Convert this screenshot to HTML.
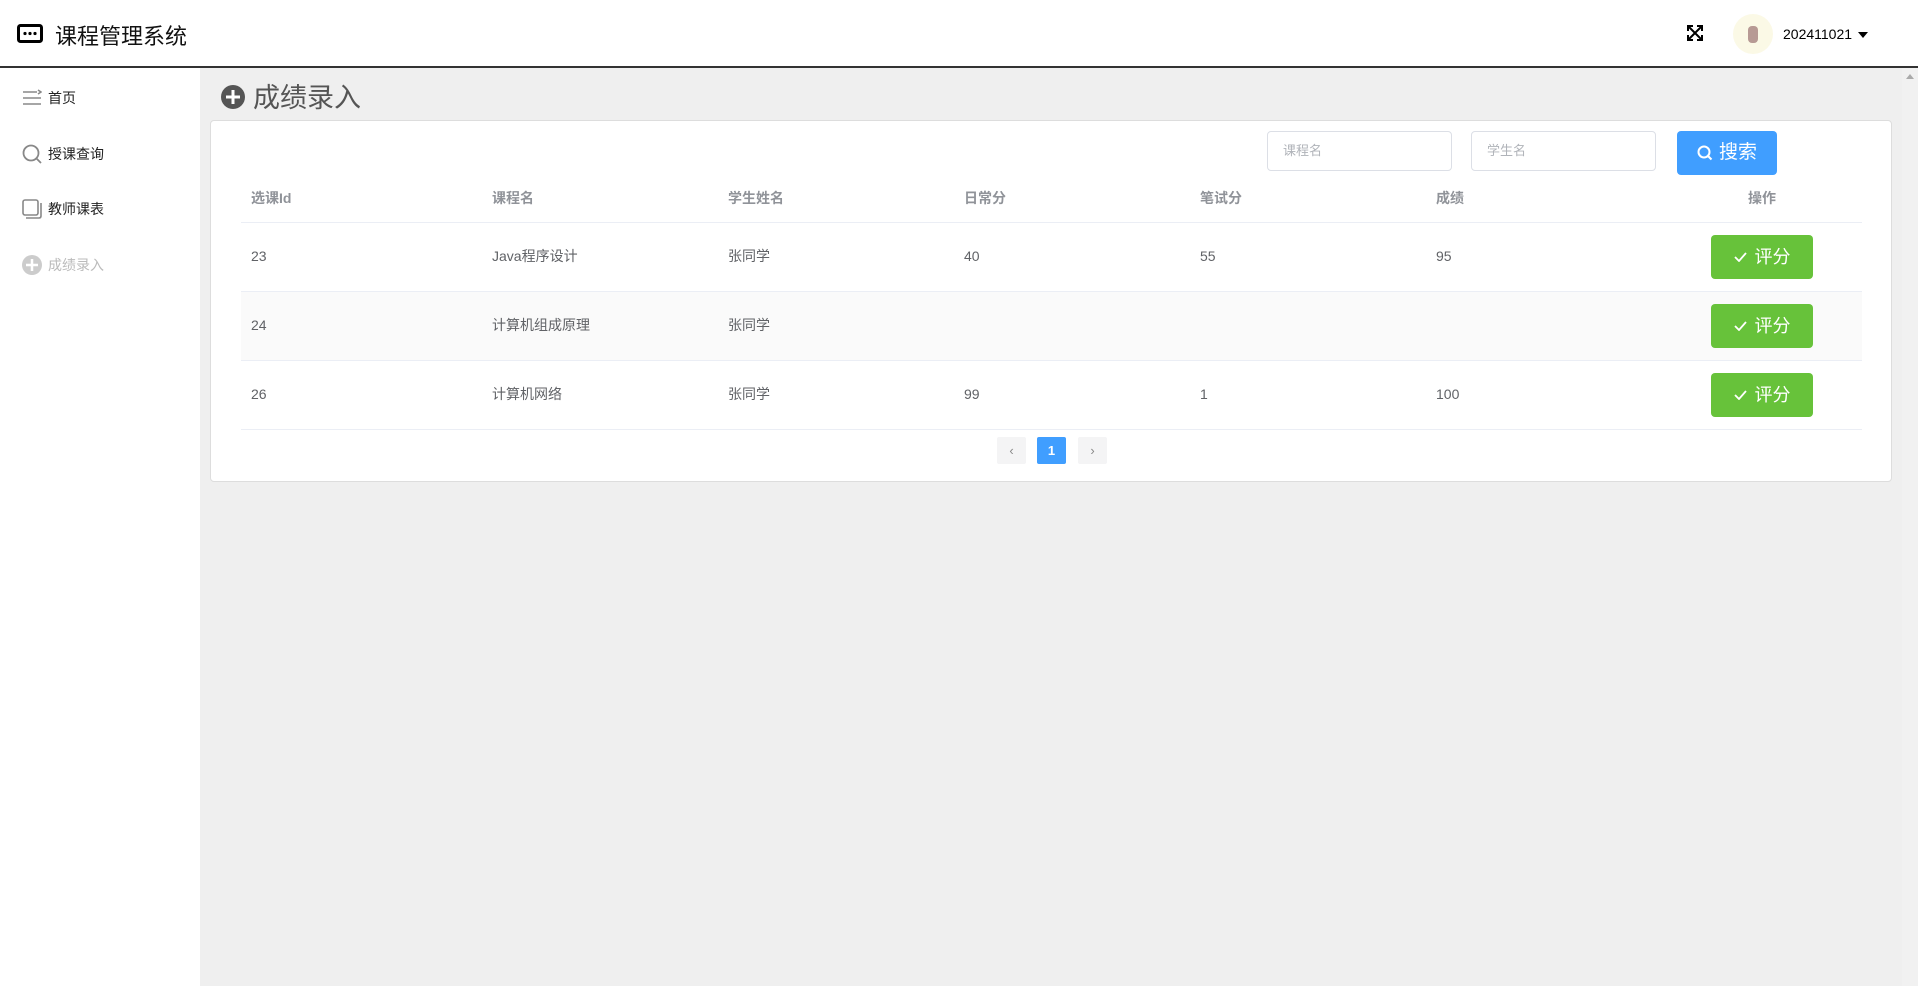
<!DOCTYPE html>
<html><head><meta charset="utf-8"><style>
*{margin:0;padding:0;box-sizing:border-box}
body{width:1918px;height:986px;overflow:hidden;background:#efefef;font-family:"Liberation Sans","Noto Sans CJK SC",sans-serif;position:relative}
.hdr{position:absolute;left:0;top:0;width:1918px;height:68px;background:#fff;border-bottom:2px solid #333}
.side{position:absolute;left:0;top:68px;width:200px;height:918px;background:#fff}
.abs{position:absolute}
.si{position:absolute;left:22px;font-size:14px;color:#222;display:flex;align-items:center;height:24px;line-height:16px}
.si svg{margin-right:6px}
.card{position:absolute;left:210px;top:120px;width:1682px;height:362px;background:#fff;border:1px solid #ddd;border-radius:4px}
.inp{position:absolute;top:131px;width:185px;height:40px;border:1px solid #dcdfe6;border-radius:4px;font-size:13px;color:#b0b3b9;padding-left:15px;line-height:38px;background:#fff}
.th{position:absolute;top:190px;font-size:14px;font-weight:bold;color:#909399;line-height:16px}
.td{position:absolute;font-size:14px;color:#606266;line-height:16px}
.line{position:absolute;left:241px;width:1621px;height:1px;background:#ebeef5}
.btn{position:absolute;left:1711px;width:102px;height:44px;background:#67c23a;border-radius:4px;color:#fff;font-size:18px;display:flex;align-items:center;justify-content:center;line-height:20px}
.pg{position:absolute;top:437px;width:29px;height:27px;background:#f4f4f5;border-radius:2px;color:#888;font-size:13px;text-align:center;line-height:27px}
</style></head><body>
<div class="hdr">
<svg class="abs" style="left:17px;top:24px" width="26" height="19" viewBox="0 0 26 19"><rect x="1.5" y="1.5" width="23" height="16" rx="2" fill="none" stroke="#000" stroke-width="3"/><circle cx="8" cy="9.5" r="1.6"/><circle cx="13" cy="9.5" r="1.6"/><circle cx="18" cy="9.5" r="1.6"/></svg>
<div class="abs" style="left:55px;top:24px;font-size:22px;line-height:26px;color:#111">课程管理系统</div>
<svg class="abs" style="left:1687px;top:25px" width="16" height="16" viewBox="0 0 16 16" fill="none" stroke="#000" stroke-width="2"><path d="M2 2L14 14M14 2L2 14"/><path d="M1 6V1H6M10 1H15V6M15 10V15H10M6 15H1V10" stroke-width="2"/></svg>
<div class="abs" style="left:1733px;top:14px;width:40px;height:40px;border-radius:50%;background:#fbf9e6"></div>
<div class="abs" style="left:1748px;top:26px;width:10px;height:17px;border-radius:4px;background:#a07a78;opacity:.75"></div>
<div class="abs" style="left:1783px;top:26px;font-size:14px;color:#000;line-height:16px">202411021</div>
<div class="abs" style="left:1858px;top:32px;width:0;height:0;border-left:5px solid transparent;border-right:5px solid transparent;border-top:6px solid #000"></div>
</div>
<div class="side">
<div class="si" style="top:18px"><svg width="20" height="18" viewBox="0 0 20 18" stroke="#888" stroke-width="1.6"><path d="M1 3H15M1 9H19M1 15H19M16 1L19 3L16 5" fill="none"/></svg>首页</div>
<div class="si" style="top:74px"><svg width="20" height="20" viewBox="0 0 20 20" fill="none" stroke="#888" stroke-width="1.8"><circle cx="9" cy="9" r="7.5"/><path d="M14.5 14.5L19 19"/></svg>授课查询</div>
<div class="si" style="top:129px"><svg width="20" height="20" viewBox="0 0 20 20" fill="none" stroke="#888" stroke-width="1.6"><rect x="1" y="1" width="15" height="15" rx="2"/><path d="M4 19H17Q19 19 19 17V4"/></svg>教师课表</div>
<div class="si" style="top:185px;color:#bbb"><svg width="20" height="20" viewBox="0 0 20 20"><circle cx="10" cy="10" r="10" fill="#ccc"/><path d="M10 4V16M4 10H16" stroke="#fff" stroke-width="2.5"/></svg>成绩录入</div>
</div>
<svg class="abs" style="left:221px;top:85px" width="24" height="24" viewBox="0 0 24 24"><circle cx="12" cy="12" r="12" fill="#555"/><path d="M12 5V19M5 12H19" stroke="#fff" stroke-width="3"/></svg>
<div class="abs" style="left:253px;top:82px;font-size:27px;line-height:32px;color:#555">成绩录入</div>
<div class="abs" style="left:1902px;top:68px;width:16px;height:918px;background:#f1f1f1"></div>
<div class="abs" style="left:1906px;top:74px;border-left:4px solid transparent;border-right:4px solid transparent;border-bottom:5px solid #aaa"></div>
<div class="card"></div>
<div class="inp" style="left:1267px">课程名</div>
<div class="inp" style="left:1471px">学生名</div>
<div class="abs" style="left:1677px;top:131px;width:100px;height:44px;background:#409eff;border-radius:4px;color:#fff;font-size:19px;line-height:20px;display:flex;align-items:center;justify-content:center"><svg width="16" height="16" viewBox="0 0 16 16" fill="none" stroke="#fff" stroke-width="2" style="margin-right:6px"><circle cx="7" cy="7" r="5.5"/><path d="M11 11L14.5 14.5"/></svg>搜索</div>
<div class="th" style="left:251px">选课Id</div>
<div class="th" style="left:492px">课程名</div>
<div class="th" style="left:728px">学生姓名</div>
<div class="th" style="left:964px">日常分</div>
<div class="th" style="left:1200px">笔试分</div>
<div class="th" style="left:1436px">成绩</div>
<div class="th" style="left:1748px">操作</div>
<div class="line" style="top:222px"></div>
<div class="abs" style="left:241px;top:292px;width:1621px;height:68px;background:#fafafa"></div>
<div class="line" style="top:291px"></div>
<div class="line" style="top:360px"></div>
<div class="line" style="top:429px"></div>
<div class="td" style="left:251px;top:248px">23</div><div class="td" style="left:492px;top:248px">Java程序设计</div><div class="td" style="left:728px;top:248px">张同学</div><div class="td" style="left:964px;top:248px">40</div><div class="td" style="left:1200px;top:248px">55</div><div class="td" style="left:1436px;top:248px">95</div>
<div class="td" style="left:251px;top:317px">24</div><div class="td" style="left:492px;top:317px">计算机组成原理</div><div class="td" style="left:728px;top:317px">张同学</div>
<div class="td" style="left:251px;top:386px">26</div><div class="td" style="left:492px;top:386px">计算机网络</div><div class="td" style="left:728px;top:386px">张同学</div><div class="td" style="left:964px;top:386px">99</div><div class="td" style="left:1200px;top:386px">1</div><div class="td" style="left:1436px;top:386px">100</div>
<div class="btn" style="top:235px"><svg width="13" height="10" viewBox="0 0 13 10" fill="none" stroke="#fff" stroke-width="1.8" style="margin-right:8px"><path d="M1 5L5 9L12 1"/></svg>评分</div>
<div class="btn" style="top:304px"><svg width="13" height="10" viewBox="0 0 13 10" fill="none" stroke="#fff" stroke-width="1.8" style="margin-right:8px"><path d="M1 5L5 9L12 1"/></svg>评分</div>
<div class="btn" style="top:373px"><svg width="13" height="10" viewBox="0 0 13 10" fill="none" stroke="#fff" stroke-width="1.8" style="margin-right:8px"><path d="M1 5L5 9L12 1"/></svg>评分</div>
<div class="pg" style="left:997px">‹</div>
<div class="pg" style="left:1037px;background:#409eff;color:#fff;font-weight:bold">1</div>
<div class="pg" style="left:1078px">›</div>
</body></html>
